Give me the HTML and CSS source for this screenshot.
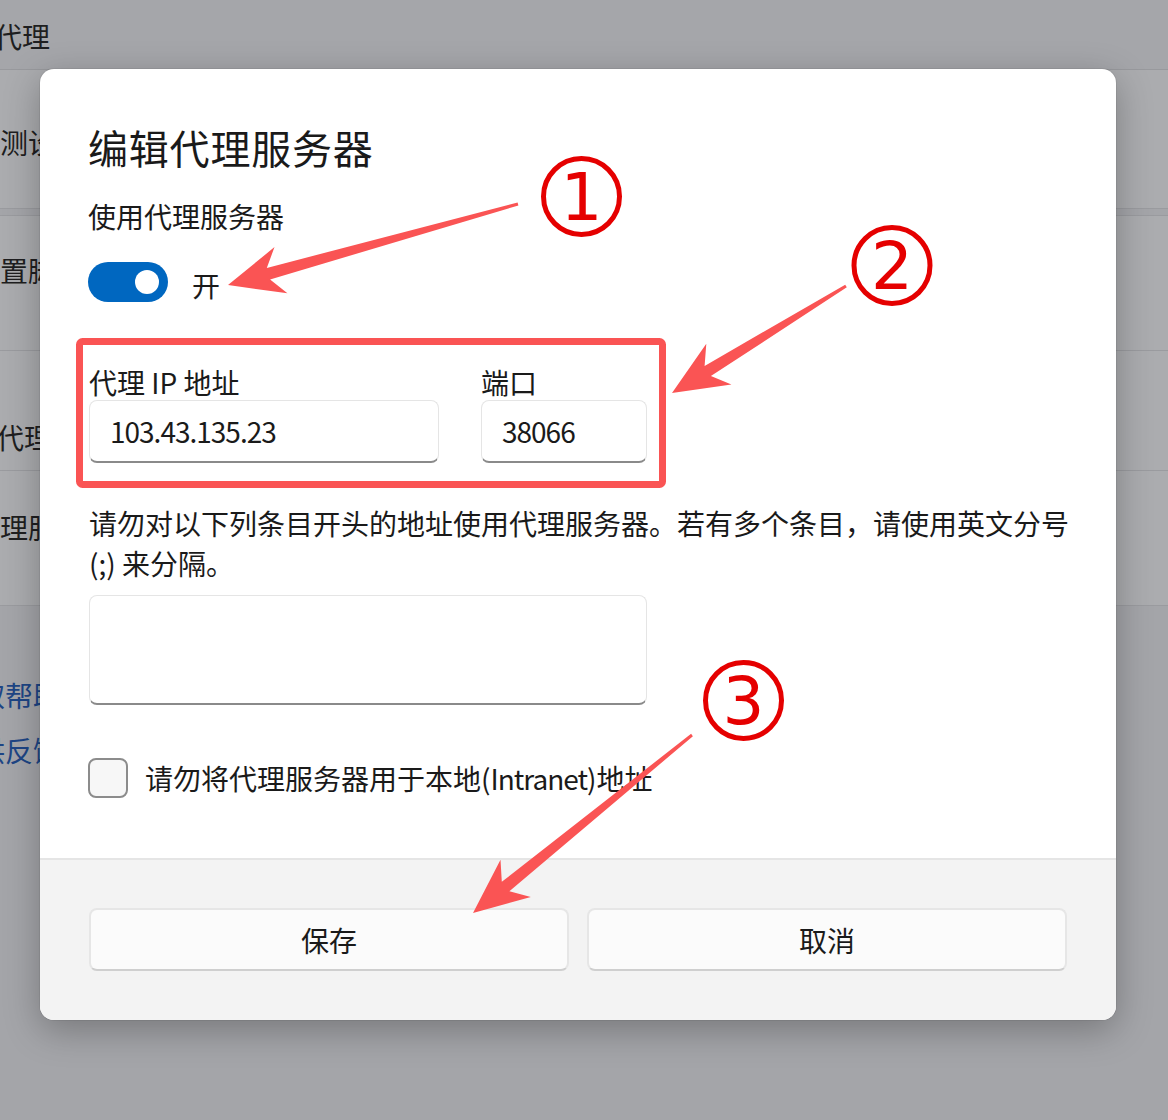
FILE: index.html
```html
<!DOCTYPE html>
<html lang="zh-CN">
<head>
<meta charset="utf-8">
<title>编辑代理服务器</title>
<link rel="stylesheet" href="styles.css">
</head>
<body>
<div class="page">
  <header class="bg-header"><span class="bg-text shift-head">手动代理</span></header>
  <section class="bg-card row-a"><span class="bg-text shift-3">自动检测设置</span></section>
  <section class="bg-card row-b"><span class="bg-text shift-3">使用设置脚本</span></section>
  <section class="bg-card row-c"><span class="bg-text shift-2">使用代理服务器</span></section>
  <section class="bg-card row-d"><span class="bg-text shift-1">代理服务器</span></section>
  <div class="bg-links">
    <a class="bg-link">获取帮助</a>
    <a class="bg-link">提供反馈</a>
  </div>
</div>

<div class="dialog">
  <div class="dialog-body">
    <h1 class="title">编辑代理服务器</h1>
    <div class="label">使用代理服务器</div>
    <div class="toggle-row">
      <span class="toggle"><span class="knob"></span></span>
      <span class="toggle-text">开</span>
    </div>
    <div class="fields">
      <div class="field field-ip">
        <div class="field-label">代理 IP 地址</div>
        <div class="input">103.43.135.23</div>
      </div>
      <div class="field field-port">
        <div class="field-label">端口</div>
        <div class="input">38066</div>
      </div>
    </div>
    <p class="desc">请勿对以下列条目开头的地址使用代理服务器。若有多个条目，请使用英文分号 (;) 来分隔。</p>
    <div class="textarea"></div>
    <div class="check-row">
      <span class="checkbox"></span>
      <span class="check-text">请勿将代理服务器用于本地(<span class="latin">Intranet</span>)地址</span>
    </div>
  </div>
  <div class="dialog-footer">
    <button class="btn">保存</button>
    <button class="btn">取消</button>
  </div>
</div>

<svg class="annot" width="1168" height="1120" viewBox="0 0 1168 1120" xmlns="http://www.w3.org/2000/svg">
  <rect x="79.5" y="341.5" width="583" height="143" rx="3" fill="none" stroke="#fa5454" stroke-width="7"/>
  <polygon fill="#fa5454" points="228,285 287.4,293.3 270.1,279.5 518.4,205.4 517.6,202.6 266.8,267.9 274.5,247.1"/>
  <polygon fill="#fa5454" points="672,393 731.4,384.6 710.9,376.1 846.8,287.3 845.2,284.7 704.6,365.9 706.3,343.7"/>
  <polygon fill="#fa5454" points="473,913 530.8,896.9 509.4,891.2 692.9,736.2 691.1,733.8 501.8,881.8 500.5,859.7"/>
  <g class="num">
    <circle cx="581.5" cy="196.5" r="38" fill="none" stroke="#e50000" stroke-width="5"/>
    <text x="581.5" y="220" text-anchor="middle">1</text>
    <circle cx="892" cy="265.5" r="38" fill="none" stroke="#e50000" stroke-width="5"/>
    <text x="892" y="288.5" text-anchor="middle">2</text>
    <circle cx="743.5" cy="700.5" r="38" fill="none" stroke="#e50000" stroke-width="5"/>
    <text x="743.5" y="723.5" text-anchor="middle">3</text>
  </g>
</svg>
</body>
</html>
```

FILE: styles.css
```css
* {
  box-sizing: border-box;
}

html, body {
  margin: 0;
  padding: 0;
}

body {
  width: 1168px;
  height: 1120px;
  overflow: hidden;
  position: relative;
  background: #a4a5a9;
  font-family: "Noto Sans CJK SC", "Noto Sans", sans-serif;
  color: #1a1a1a;
}

/* ---------- dimmed settings page behind the dialog ---------- */
.page {
  display: flex;
  flex-direction: column;
}

.bg-text {
  display: block;
  font-size: 28px;
  line-height: 40px;
  white-space: nowrap;
  color: #1e1e20;
}

.shift-head { margin-left: -62px; }
.shift-1 { margin-left: -28px; }
.shift-2 { margin-left: -60px; }
.shift-3 { margin-left: -84px; }

.bg-header {
  height: 70px;
  padding-top: 16px;
  background: #a5a6aa;
  border-bottom: 1px solid #98999d;
}

.bg-card {
  background: #abacaf;
}

.row-a {
  height: 139px;
  padding-top: 52px;
  border-bottom: 1px solid #9a9b9f;
  margin-bottom: 6px;
}

.row-b {
  height: 136px;
  padding-top: 34px;
  border-top: 1px solid #9a9b9f;
  border-bottom: 1px solid #9a9b9f;
}

.row-c {
  height: 120px;
  padding-top: 66px;
  border-bottom: 1px solid #9a9b9f;
}

.row-d {
  height: 135px;
  padding-top: 36px;
  border-bottom: 1px solid #9a9b9f;
}

.bg-links {
  display: flex;
  flex-direction: column;
  gap: 15px;
  padding-top: 69px;
}

.bg-link {
  display: block;
  font-size: 28px;
  line-height: 40px;
  white-space: nowrap;
  color: #1d4585;
  margin-left: -51px;
}

/* ---------- dialog ---------- */
.dialog {
  position: absolute;
  left: 40px;
  top: 69px;
  width: 1076px;
  height: 951px;
  background: #ffffff;
  border-radius: 14px;
  overflow: hidden;
  display: flex;
  flex-direction: column;
  box-shadow: 0 10px 36px rgba(0, 0, 0, 0.28), 0 0 0 1px rgba(0, 0, 0, 0.06);
}

.dialog-body {
  height: 789px;
  padding: 52px 48px 0 48px;
  display: flex;
  flex-direction: column;
  align-items: flex-start;
}

.title {
  margin: 0;
  font-size: 40px;
  line-height: 52px;
  font-weight: 400;
  letter-spacing: 0.8px;
  color: #1a1a1a;
}

.label {
  margin-top: 23px;
  font-size: 28px;
  line-height: 40px;
}

.toggle-row {
  margin-top: 26px;
  display: flex;
  align-items: center;
  gap: 24px;
  height: 40px;
}

.toggle {
  width: 80px;
  height: 40px;
  border-radius: 20px;
  background: #0067c0;
  display: flex;
  align-items: center;
  justify-content: flex-end;
  padding-right: 9px;
}

.knob {
  width: 24px;
  height: 24px;
  border-radius: 50%;
  background: #ffffff;
}

.toggle-text {
  font-size: 28px;
  line-height: 40px;
  padding-top: 5px;
}

.fields {
  margin-top: 62px;
  display: flex;
  gap: 42px;
  padding-left: 1px;
}

.field {
  display: flex;
  flex-direction: column;
}

.field-ip { width: 350px; }
.field-port { width: 166px; }

.field-label {
  font-size: 28px;
  line-height: 36px;
}

.input {
  height: 63px;
  border: 1px solid #e5e5e5;
  border-bottom: 2px solid #8a8a8a;
  border-radius: 8px;
  background: #ffffff;
  padding-left: 20px;
  font-size: 28px;
  line-height: 60px;
  letter-spacing: -1px;
  color: #1a1a1a;
}

.desc {
  margin: 41px -4px 0 1px;
  font-size: 28px;
  line-height: 39.5px;
}

.textarea {
  margin-top: 12px;
  margin-left: 1px;
  width: 558px;
  height: 110px;
  border: 1px solid #e5e5e5;
  border-bottom: 2px solid #8a8a8a;
  border-radius: 8px;
  background: #ffffff;
}

.check-row {
  margin-top: 53px;
  display: flex;
  align-items: center;
  gap: 17px;
  height: 40px;
}

.checkbox {
  width: 40px;
  height: 40px;
  border: 2px solid #8c8c8c;
  border-radius: 8px;
  background: #f7f7f7;
}

.check-text {
  font-size: 28px;
  line-height: 40px;
}

.latin {
  letter-spacing: -1px;
}

.dialog-footer {
  flex: 1;
  background: #f3f3f3;
  border-top: 2px solid #e5e5e5;
  padding: 48px 49px 0 49px;
  display: flex;
  gap: 18px;
  align-items: flex-start;
}

.btn {
  flex: 1;
  height: 63px;
  border: 2px solid #e6e6e6;
  border-bottom-color: #cfcfcf;
  border-radius: 8px;
  background: #fbfbfb;
  font-family: "Noto Sans CJK SC", "Noto Sans", sans-serif;
  font-size: 28px;
  line-height: 40px;
  color: #1a1a1a;
  padding: 0;
}

/* ---------- annotations ---------- */
.annot {
  position: absolute;
  left: 0;
  top: 0;
  pointer-events: none;
}

.num text {
  font-family: "DejaVu Sans", sans-serif;
  font-size: 66px;
  fill: #e50000;
}
```
